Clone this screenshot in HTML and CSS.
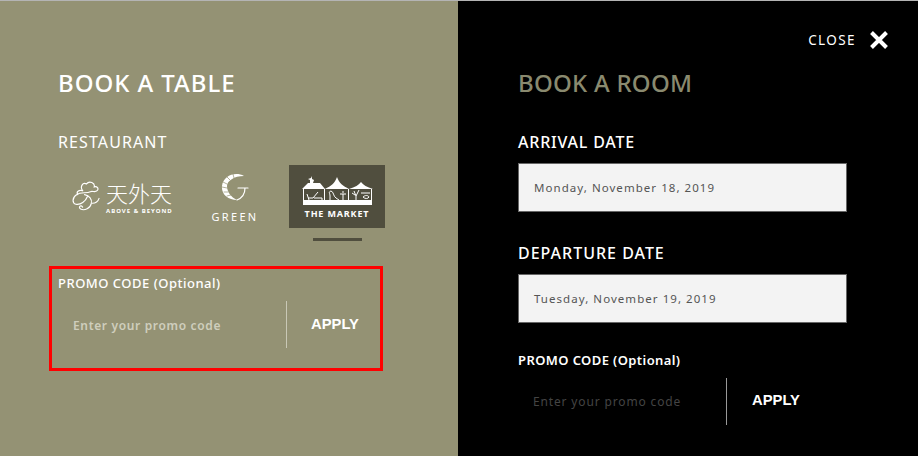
FILE: index.html
```html
<!DOCTYPE html>
<html lang="en">
<head>
<meta charset="utf-8">
<title>Book</title>
<link rel="stylesheet" href="styles.css">
</head>
<body>
<main class="modal">
  <section class="panel panel-table">
    <h2 class="title title-light">BOOK A TABLE</h2>
    <h3 class="label restaurant-label">RESTAURANT</h3>
    <div class="logos">
      <div class="logo logo-above">
        <svg class="cloud" viewBox="0 0 30 32" width="29" height="31" fill="none" stroke="#fff" stroke-width="1.2" stroke-linecap="round">
          <path d="M11 10C8 6 11 1 15 3C18 -1 24 2 23 6C26 5 28 8 26 10C24 12 21 10 19 11C15 13 9 11 5 14C0 17 0 23 4 24C9 25 14 21 16 16"/>
          <path d="M11 10C7 9 4 11 6 14M13 14C18 15 21 19 20 23C19 28 13 31 9 29C6 27 9 24 11 27"/>
          <path d="M21 23C24 23 27 21 28 18"/>
        </svg>
        <div class="above-text">
          <span class="above-cn">天外天</span>
          <span class="above-en">ABOVE &amp; BEYOND</span>
        </div>
      </div>
      <div class="logo logo-green">
        <svg class="leaf-g" viewBox="0 0 28 28" width="28" height="28" fill="none" stroke="#fff" stroke-linecap="round">
          <path d="M23 3C14 -2 2 3 1 13C0 21 7 27 16 27C10 24 6 19 6 13C6 8 13 3 23 3Z" fill="#fff" stroke="none"/>
          <path d="M2 9L6 11M1 14L6 15M3 19L7 19M6 23L10 22M6 4L9 7M12 1L13 5" stroke="#949274" stroke-width=".7"/>
          <path d="M17 15H27M24 15C24 21 21 25 16 27" stroke-width="1.2"/>
        </svg>
        <span class="green-text">GREEN</span>
      </div>
      <div class="logo-col">
        <div class="logo logo-market">
          <svg class="stalls" viewBox="0 0 72 30" width="72" height="30">
            <g fill="#fff">
              <path d="M1 13L7 7H19L24 13ZM24 13C30 10 34 7 36 1C38 7 42 10 48 13ZM48 13C54 11 58 9 60 6C62 9 66 11 72 13Z"/>
              <path d="M2 24H71V29H2Z"/>
              <path d="M2 13H3V24H2ZM23 13H24V24H23ZM47 13H48V24H47ZM70 13H71V24H70Z"/>
              <path d="M9 7V4L7 3L10 2L11 0V3L13 4L12 7Z"/>
            </g>
            <g fill="none" stroke="#fff" stroke-width="1">
              <path d="M7 22L12 22L17 16M6 18L8 24M13 22H21V24"/>
              <path d="M29 24V20C29 17 27 16 30 15C33 16 32 20 35 22L38 24"/>
              <path d="M42 24V18M39 18H45M42 15V17"/>
              <path d="M53 15L55 20V24M58 14L55 20M51 17L54 19"/>
              <path d="M60 17H69M62 21C64 19 67 19 68 21C67 23 64 23 62 21Z"/>
            </g>
          </svg>
          <span class="market-text">THE MARKET</span>
        </div>
        <div class="market-bar"></div>
      </div>
    </div>
    <form class="promo promo-boxed">
      <label class="promo-label">PROMO CODE (Optional)</label>
      <div class="promo-row">
        <span class="placeholder placeholder-light">Enter your promo code</span>
        <button type="button" class="apply">APPLY</button>
      </div>
    </form>
  </section>
  <section class="panel panel-room">
    <div class="close-row">
      <span class="close-text">CLOSE</span>
      <svg class="close-icon" viewBox="0 0 20 20" width="20" height="20"><path d="M2.5 2.5L17.5 17.5M17.5 2.5L2.5 17.5" stroke="#fff" stroke-width="4"/></svg>
    </div>
    <h2 class="title title-olive">BOOK A ROOM</h2>
    <h3 class="label date-label">ARRIVAL DATE</h3>
    <div class="date-field">Monday, November 18, 2019</div>
    <h3 class="label date-label departure">DEPARTURE DATE</h3>
    <div class="date-field">Tuesday, November 19, 2019</div>
    <form class="promo promo-room">
      <label class="promo-label">PROMO CODE (Optional)</label>
      <div class="promo-row">
        <span class="placeholder placeholder-dark">Enter your promo code</span>
        <button type="button" class="apply">APPLY</button>
      </div>
    </form>
  </section>
</main>
</body>
</html>
```
FILE: styles.css
```css
* { box-sizing: border-box; }
html, body { margin: 0; padding: 0; }
body {
  width: 918px;
  height: 456px;
  overflow: hidden;
  background: #b4b4b4;
  font-family: "Noto Sans", "Open Sans", sans-serif;
  color: #fff;
}
.modal { display: flex; height: 455px; margin-top: 1px; }
.panel { height: 100%; }
.panel-table { width: 458px; background: #949274; padding: 67px 0 0 58px; }
.panel-room { width: 460px; background: #000; padding: 27px 0 0 60px; }

.title { margin: 0; font-size: 24px; line-height: 30px; font-weight: 500; }
.title-light { color: #fff; letter-spacing: .95px; }
.title-olive { color: #8a8a6f; margin-top: 16px; letter-spacing: .25px; }
.label { margin: 0; font-size: 16px; line-height: 22px; font-weight: 500; color: #fff; }
.restaurant-label { margin-top: 33px; letter-spacing: 1.1px; font-weight: 400; }

.logos { display: flex; margin-top: 12px; }
.logo { display: flex; }
.logo-above { width: 100px; margin: 14px 0 0 14px; height: 34px; align-items: center; gap: 5px; }
.cloud { flex: none; }
.above-text { display: flex; flex-direction: column; padding-top: 3px; }
.above-cn { font-family: "Noto Sans CJK SC", sans-serif; font-size: 22px; line-height: 22px; font-weight: 300; white-space: nowrap; }
.above-en { font-size: 6px; line-height: 8px; font-weight: 700; letter-spacing: 1px; margin-top: 4px; white-space: nowrap; }
.logo-green { flex-direction: column; align-items: center; width: 46px; margin: 8px 0 0 40px; }
.green-text { font-size: 11px; line-height: 14px; letter-spacing: 2.3px; margin-top: 9px; }
.logo-col { margin-left: 31px; display: flex; flex-direction: column; align-items: center; }
.logo-market { width: 96px; height: 63px; background: #504e3e; flex-direction: column; align-items: center; padding-top: 11px; }
.market-text { font-size: 9px; line-height: 12px; font-weight: 700; letter-spacing: .85px; margin-top: 2px; white-space: nowrap; }
.market-bar { width: 49px; height: 3px; margin-top: 10px; background: #504e3e; }

.promo-label { display: block; font-size: 13px; line-height: 18px; letter-spacing: .5px; font-weight: 500; }
.promo-boxed { width: 334px; height: 105px; margin: 25px 0 0 -9px; border: 3px solid #f00; padding: 5px 0 0 6px; }
.promo-row { display: flex; height: 47px; margin-top: 9px; }
.placeholder { width: 229px; padding: 16px 0 0 15px; font-size: 12px; line-height: 18px; letter-spacing: .65px; font-weight: 600; border-right: 1px solid #c9c8b6; white-space: nowrap; }
.placeholder-light { color: #cfcebd; }
.placeholder-dark { color: #444; font-weight: 400; width: 209px; padding-top: 15px; letter-spacing: .85px; border-right-color: #999; }
.apply { padding: 0 0 1px 24px; border: 0; background: none; color: #fff; font-family: "Liberation Sans", sans-serif; font-size: 14.8px; font-weight: 700; cursor: pointer; }
.promo-room .apply { padding: 0 0 3px 25px; }

.close-row { display: flex; justify-content: flex-end; align-items: center; height: 24px; padding-right: 29px; gap: 13px; }
.close-text { font-size: 13.5px; letter-spacing: 1.4px; }
.date-label { margin-top: 33px; letter-spacing: .8px; }
.date-label.departure { margin-top: 30px; letter-spacing: 1px; }
.date-field { width: 329px; height: 49px; margin-top: 10px; background: #f3f3f3; border: 1px solid #666; padding-left: 15px; font-size: 11.5px; line-height: 47px; letter-spacing: 1.05px; color: #555; }
.promo-room { margin-top: 28px; }
.promo-room .promo-label { font-weight: 600; letter-spacing: .4px; }
```
